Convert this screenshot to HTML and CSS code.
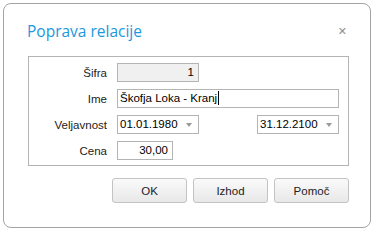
FILE: index.html
```html
<!DOCTYPE html>
<html lang="sl">

<head>
    <meta charset="UTF-8">
    <title>Poprava relacije</title>
    <link rel="stylesheet" href="styles.css">
</head>

<body>
    <div class="dialog">
        <div class="dialog-head">
            <h1 class="dialog-title">Poprava relacije</h1>
            <span class="close" title="Zapri">&#x2715;</span>
        </div>

        <div class="group">
            <div class="form-grid">
                <label class="label">Šifra</label>
                <div class="field field-code readonly">1</div>

                <label class="label">Ime</label>
                <div class="field field-name">Škofja Loka - Kranj<span class="caret"></span></div>

                <label class="label">Veljavnost</label>
                <div class="date-row">
                    <div class="field field-date">01.01.1980<span class="arrow"></span></div>
                    <div class="field field-date">31.12.2100<span class="arrow"></span></div>
                </div>

                <label class="label">Cena</label>
                <div class="field field-price">30,00</div>
            </div>
        </div>

        <div class="buttons">
            <button class="button">OK</button>
            <button class="button">Izhod</button>
            <button class="button">Pomoč</button>
        </div>
    </div>
</body>

</html>
```

FILE: styles.css
```css
body {
    margin: 0;
    padding: 3px;
    background: #fff;
    font-family: 'Liberation Sans', Arial, sans-serif;
    font-size: 11.5px;
    color: #000;
}

.dialog {
    box-sizing: border-box;
    width: 368px;
    height: 225px;
    border: 1px solid #a3a3a3;
    border-radius: 8px;
    background: #fff;
}

.dialog-head {
    display: flex;
    justify-content: space-between;
    align-items: center;
    padding: 16px 23px 0 23px;
    height: 22px;
}

.dialog-title {
    margin: 0;
    font-family: 'Open Sans', 'Noto Sans', sans-serif;
    font-size: 15.5px;
    font-weight: 400;
    color: #1b98de;
}

.close {
    font-family: 'DejaVu Sans', sans-serif;
    font-size: 11px;
    font-weight: bold;
    color: #909090;
}

.group {
    box-sizing: border-box;
    width: 321px;
    height: 110px;
    margin: 14px 0 0 24px;
    border: 1px solid #b4b4b4;
    padding-top: 6px;
}

.form-grid {
    display: grid;
    grid-template-columns: 78px 222px;
    column-gap: 10px;
    row-gap: 7px;
    align-items: center;
}

.label {
    text-align: right;
    color: #222;
}

.field {
    box-sizing: border-box;
    position: relative;
    height: 19px;
    line-height: 17px;
    border: 1px solid #b4b4b4;
    padding: 0 4px 0 2px;
    background: #fff;
    white-space: nowrap;
}

.readonly {
    background: #f0f0f0;
}

.field-code {
    width: 82px;
    text-align: right;
}

.field-name {
    width: 222px;
}

.caret {
    display: inline-block;
    width: 1px;
    height: 14px;
    background: #000;
    vertical-align: -3px;
    margin-left: 1px;
}

.date-row {
    display: flex;
    justify-content: space-between;
}

.field-date {
    width: 82px;
}

.arrow {
    position: absolute;
    right: 6px;
    top: 7px;
    border-left: 3px solid transparent;
    border-right: 3px solid transparent;
    border-top: 4px solid #9a9a9a;
}

.field-price {
    width: 56px;
    text-align: right;
}

.buttons {
    display: flex;
    justify-content: flex-end;
    gap: 6px;
    margin-top: 12px;
    padding-right: 21px;
}

.button {
    width: 75px;
    height: 25px;
    border: 1px solid #c3c3c3;
    border-radius: 3px;
    background: linear-gradient(#fafafa, #e8e8e8);
    font-family: 'Liberation Sans', Arial, sans-serif;
    font-size: 11.5px;
    color: #222;
    padding: 0;
}
```
